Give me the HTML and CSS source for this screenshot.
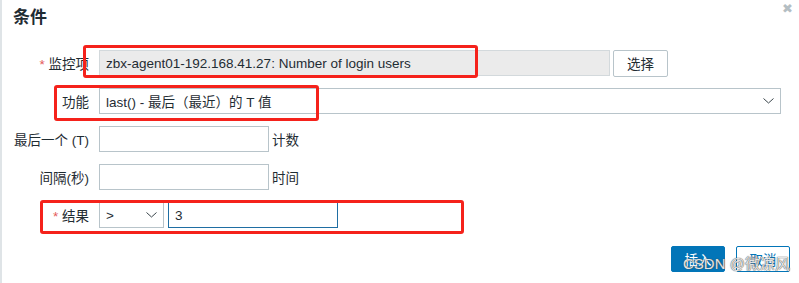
FILE: index.html
```html
<!DOCTYPE html>
<html lang="zh">
<head>
    <meta charset="UTF-8">
    <title>条件</title>
    <link rel="stylesheet" href="styles.css">
</head>
<body>
    <div class="dialog">
        <div class="head">
            <h2 class="title">条件</h2>
            <span class="close">&#10006;</span>
        </div>

        <div class="form">
            <div class="row">
                <label class="label"><span class="req">*</span> 监控项</label>
                <div class="input readonly wide">zbx-agent01-192.168.41.27: Number of login users</div>
                <button class="btn-alt">选择</button>
            </div>
            <div class="row">
                <label class="label">功能</label>
                <div class="select full">
                    <span>last() - 最后（最近）的 T 值</span>
                    <svg class="chev" width="11" height="6" viewBox="0 0 11 6"><path d="M0.5 0.5 L5.5 5 L10.5 0.5" fill="none" stroke="#3a454b" stroke-width="1"/></svg>
                </div>
            </div>
            <div class="row">
                <label class="label">最后一个 (T)</label>
                <div class="input short"></div>
                <span class="unit">计数</span>
            </div>
            <div class="row">
                <label class="label">间隔(秒)</label>
                <div class="input short"></div>
                <span class="unit">时间</span>
            </div>
            <div class="row">
                <label class="label"><span class="req">*</span> 结果</label>
                <div class="select op">
                    <span>&gt;</span>
                    <svg class="chev" width="11" height="6" viewBox="0 0 11 6"><path d="M0.5 0.5 L5.5 5 L10.5 0.5" fill="none" stroke="#3a454b" stroke-width="1"/></svg>
                </div>
                <div class="input short focus">3</div>
            </div>
        </div>

        <div class="foot">
            <button class="btn-main">插入</button>
            <button class="btn-cancel">取消</button>
        </div>

        <!-- annotation boxes -->
        <div class="mark mark-item"></div>
        <div class="mark mark-func"></div>
        <div class="mark mark-result"></div>

        <div class="watermark">CSDN @微凉风</div>
    </div>
</body>
</html>
```

FILE: styles.css
```css
body {
    margin: 0;
    padding: 0;
    overflow: hidden;
    background: #fff;
    font-family: "Liberation Sans", "Noto Sans CJK SC", sans-serif;
    font-size: 13.5px;
    color: #1f2c33;
}

.dialog {
    position: relative;
    width: 797px;
    height: 283px;
    border-left: 2px solid #dfe4e7;
}

.head {
    height: 50px;
    padding: 0 11px;
    display: flex;
    justify-content: space-between;
    align-items: flex-start;
}

.title {
    margin: 0;
    padding-top: 7px;
    font-size: 17px;
    line-height: 21px;
    font-weight: bold;
}

.close {
    margin-top: 1px;
    margin-right: -5px;
    font-size: 13px;
    color: #b4bec3;
}

.form {
    display: flex;
    flex-direction: column;
    gap: 12px;
    padding-right: 18px;
}

.row {
    display: flex;
    align-items: center;
    height: 26px;
}

.label {
    width: 87px;
    margin-right: 10px;
    text-align: right;
    white-space: nowrap;
}

.req {
    color: #e45959;
}

.input,
.select {
    box-sizing: border-box;
    height: 26px;
    border: 1px solid #b8c4ca;
    background: #fff;
    padding: 0 6px;
    display: flex;
    align-items: center;
    white-space: nowrap;
}

.readonly {
    background: #ebebeb;
    border-color: #d3d9dc;
}

.wide {
    width: 511px;
}

.short {
    width: 170px;
}

.focus {
    border-color: #1f6ea3;
    margin-left: 4px;
    width: 170px;
}

.full {
    flex: 1;
    justify-content: space-between;
}

.op {
    width: 65px;
    justify-content: space-between;
}

.unit {
    margin-left: 3px;
}

.btn-alt {
    margin-left: 3px;
    width: 55px;
    height: 27px;
    border: 1px solid #b8c4ca;
    border-radius: 2px;
    background: #fff;
    color: #1f2c33;
    font-family: inherit;
    font-size: 13.5px;
}

.foot {
    display: flex;
    justify-content: flex-end;
    gap: 11px;
    padding-right: 9px;
    margin-top: 18px;
}

.btn-main,
.btn-cancel {
    width: 54px;
    height: 26px;
    border-radius: 2px;
    font-family: inherit;
    font-size: 13.5px;
    border: 1px solid #0275b8;
}

.btn-main {
    background: #0275b8;
    color: #fff;
}

.btn-cancel {
    background: #fff;
    color: #0275b8;
}

.mark {
    position: absolute;
    border: 3px solid #f5221b;
    border-radius: 3px;
    box-sizing: border-box;
}

.mark-item {
    left: 81px;
    top: 45px;
    width: 395px;
    height: 33px;
}

.mark-func {
    left: 52px;
    top: 85px;
    width: 265px;
    height: 36px;
}

.mark-result {
    left: 38px;
    top: 200px;
    width: 424px;
    height: 34px;
}

.watermark {
    position: absolute;
    left: 681px;
    top: 252px;
    font-size: 15px;
    color: rgba(255, 255, 255, 0.85);
    text-shadow: 0 0 1px #555, 0 0 1px #555;
    white-space: nowrap;
}
```
